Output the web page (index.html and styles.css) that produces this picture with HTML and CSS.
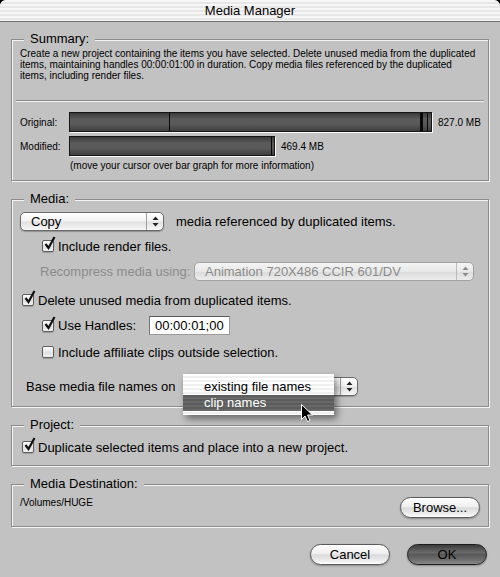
FILE: index.html
```html
<!DOCTYPE html>
<html>
<head>
  <title>Media Manager</title>
  <link rel="stylesheet" href="styles.css">
</head>
<body>
<div class="window">
  <div class="titlebar">Media Manager</div>
  <div class="content">

    <fieldset class="group summary">
      <legend>Summary:</legend>
      <p class="desc">Create a new project containing the items you have selected. Delete unused media from the duplicated<br>items, maintaining handles 00:00:01:00 in duration. Copy media files referenced by the duplicated<br>items, including render files.</p>
      <div class="separator"></div>
      <div class="graphRow first">
        <span class="graphLabel">Original:</span>
        <div class="bar" style="width: 363px;">
          <span class="tick" style="left: 99px;"></span>
          <span class="tick" style="left: 350px; width: 3px;"></span>
          <span class="tick" style="left: 357px;"></span>
        </div>
        <span class="size">827.0 MB</span>
      </div>
      <div class="graphRow">
        <span class="graphLabel">Modified:</span>
        <div class="bar" style="width: 206px;">
          <span class="tick" style="left: 201px;"></span>
        </div>
        <span class="size">469.4 MB</span>
      </div>
      <p class="hint">(move your cursor over bar graph for more information)</p>
    </fieldset>

    <fieldset class="group media">
      <legend>Media:</legend>
      <div class="row rowCopy">
        <div class="popup popupCopy">
          <span class="popupText">Copy</span>
          <span class="popupArrows"><svg width="7" height="11" viewBox="0 0 7 11"><path d="M3.5 0.5 L6.5 4 L0.5 4 Z M0.5 7 L6.5 7 L3.5 10.5 Z" fill="#222"/></svg></span>
        </div>
        <span class="after">media referenced by duplicated items.</span>
      </div>
      <div class="row rowRender indent">
        <span class="check on"><svg width="13" height="15" viewBox="0 0 13 15"><path d="M2.5 8 L5.5 12 L11.5 1" fill="none" stroke="#111" stroke-width="2.2"/></svg></span>
        <span class="checkText">Include render files.</span>
      </div>
      <div class="row rowRecompress">
        <span class="disabledLabel">Recompress media using:</span>
        <div class="popup popupRecompress disabled">
          <span class="popupText">Animation 720X486 CCIR 601/DV</span>
          <span class="popupArrows"><svg width="7" height="11" viewBox="0 0 7 11"><path d="M3.5 0.5 L6.5 4 L0.5 4 Z M0.5 7 L6.5 7 L3.5 10.5 Z" fill="#8a8a8a"/></svg></span>
        </div>
      </div>
      <div class="row rowDelete">
        <span class="check on"><svg width="13" height="15" viewBox="0 0 13 15"><path d="M2.5 8 L5.5 12 L11.5 1" fill="none" stroke="#111" stroke-width="2.2"/></svg></span>
        <span class="checkText">Delete unused media from duplicated items.</span>
      </div>
      <div class="row rowHandles indent">
        <span class="check on"><svg width="13" height="15" viewBox="0 0 13 15"><path d="M2.5 8 L5.5 12 L11.5 1" fill="none" stroke="#111" stroke-width="2.2"/></svg></span>
        <span class="checkText handlesLabel">Use Handles:</span>
        <span class="field">00:00:01;00</span>
      </div>
      <div class="row rowAffiliate indent">
        <span class="check"></span>
        <span class="checkText">Include affiliate clips outside selection.</span>
      </div>
      <div class="row rowBase">
        <span class="baseLabel">Base media file names on</span>
        <div class="popup popupBase">
          <span class="popupText"></span>
          <span class="popupArrows"><svg width="7" height="11" viewBox="0 0 7 11"><path d="M3.5 0.5 L6.5 4 L0.5 4 Z M0.5 7 L6.5 7 L3.5 10.5 Z" fill="#222"/></svg></span>
          <div class="menu">
            <div class="menuItem">existing file names</div>
            <div class="menuItem selected">clip names</div>
            <svg class="cursor" width="13" height="19" viewBox="0 0 13 19"><path d="M0.5 0.5 L0.5 15.5 L4 12 L6.5 17.5 L9 16.5 L6.6 11 L11.5 11 Z" fill="#000" stroke="#fff" stroke-width="1"/></svg>
          </div>
        </div>
      </div>
    </fieldset>

    <fieldset class="group project">
      <legend>Project:</legend>
      <div class="row rowProject">
        <span class="check on"><svg width="13" height="15" viewBox="0 0 13 15"><path d="M2.5 8 L5.5 12 L11.5 1" fill="none" stroke="#111" stroke-width="2.2"/></svg></span>
        <span class="checkText">Duplicate selected items and place into a new project.</span>
      </div>
    </fieldset>

    <fieldset class="group destination">
      <legend>Media Destination:</legend>
      <div class="destRow">
        <span class="path">/Volumes/HUGE</span>
        <button class="button">Browse...</button>
      </div>
    </fieldset>

    <div class="buttons">
      <button class="button">Cancel</button>
      <button class="button default">OK</button>
    </div>

  </div>
</div>
</body>
</html>
```

FILE: styles.css
```css
html {
    background: #000;
}
body {
    margin: 0;
    font-family: "Liberation Sans", Arial, sans-serif;
    font-size: 13px;
    color: #000;
}
.window {
    width: 500px;
    height: 577px;
    background: #c2c2c2;
    border-radius: 6px 6px 0 0;
    overflow: hidden;
}
.titlebar {
    height: 21px;
    line-height: 21px;
    text-align: center;
    font-size: 13px;
    border-bottom: 1px solid #6e6e6e;
    background: repeating-linear-gradient(#f6f6f6 0 2px, #e7e7e7 2px 4px);
}
.content {
    padding: 9px 11px 0;
}

/* group boxes */
.group {
    margin: 0 0 10px;
    padding: 0 8px 8px;
    min-width: 0;
    border: 1px solid #8c8c8c;
    box-shadow: 1px 1px 0 #f4f4f4, inset 1px 1px 0 #f4f4f4;
}
.group legend {
    margin-left: 4px;
    padding: 0 6px;
    line-height: 16px;
    font-size: 13px;
    background: #c2c2c2;
}
.media {
    padding-bottom: 10px;
}
.project {
    padding-bottom: 10px;
}

/* summary */
.desc {
    margin: 1px 0 0;
    font-size: 10px;
    line-height: 11px;
}
.separator {
    margin: 19px -4px 0;
    height: 1px;
    background: #8c8c8c;
    box-shadow: 0 1px 0 #f4f4f4;
}
.graphRow {
    display: flex;
    align-items: center;
    height: 20px;
    margin-top: 4px;
    font-size: 10px;
    white-space: nowrap;
}
.graphRow.first {
    margin-top: 11px;
}
.graphLabel {
    flex-shrink: 0;
    width: 49px;
}
.bar {
    position: relative;
    flex-shrink: 0;
    box-sizing: border-box;
    height: 20px;
    border: 1px solid #151515;
    box-shadow: 1px 1px 0 #fafafa;
    background: linear-gradient(#3a3a3a, #5c5c5c 35%, #585858 65%, #3e3e3e);
}
.tick {
    position: absolute;
    top: 0;
    bottom: 0;
    width: 1px;
    background: #080808;
}
.size {
    margin-left: 6px;
}
.hint {
    margin: 4px 0 0 50px;
    font-size: 10px;
    line-height: 12px;
}

/* rows of controls */
.row {
    display: flex;
    align-items: center;
    height: 16px;
    white-space: nowrap;
}
.indent {
    padding-left: 22px;
}
.rowCopy {
    margin-top: 5px;
    height: 19px;
}
.rowRender {
    margin-top: 7px;
}
.rowRecompress {
    margin-top: 8px;
    height: 19px;
    padding-left: 20px;
}
.rowDelete {
    margin-top: 11px;
    padding-left: 2px;
}
.rowHandles {
    margin-top: 8px;
    height: 19px;
}
.rowAffiliate {
    margin-top: 9px;
}
.rowBase {
    margin-top: 17px;
    height: 19px;
    padding-left: 6px;
}
.rowProject {
    margin-top: 6px;
    padding-left: 2px;
}

.check {
    position: relative;
    flex-shrink: 0;
    box-sizing: border-box;
    width: 12px;
    height: 12px;
    border: 1px solid #5e5e5e;
    border-radius: 2px;
    background: linear-gradient(#fdfdfd, #e2e2e2 55%, #f0f0f0);
    box-shadow: 0 1px 1px rgba(0, 0, 0, 0.2);
}
.check svg {
    position: absolute;
    left: 0;
    top: -5px;
}
.checkText {
    margin-left: 4px;
}
.handlesLabel {
    width: 91px;
}
.field {
    box-sizing: border-box;
    width: 81px;
    height: 19px;
    padding-left: 5px;
    line-height: 17px;
    background: #fff;
    border: 1px solid #9a9a9a;
    border-top-color: #5a5a5a;
    border-left-color: #777;
}
.after {
    margin-left: 12px;
}
.disabledLabel {
    width: 154px;
    color: #8b8b8b;
}
.baseLabel {
    width: 157px;
}

/* popup buttons */
.popup {
    position: relative;
    display: flex;
    flex-shrink: 0;
    box-sizing: border-box;
    height: 19px;
    border: 1px solid #6a6a6a;
    border-radius: 5px;
    background: linear-gradient(#ffffff, #f3f3f3 45%, #e2e2e2 55%, #f7f7f7);
    box-shadow: 0 1px 1px rgba(0, 0, 0, 0.25);
}
.popupText {
    flex: 1;
    padding-left: 10px;
    line-height: 17px;
}
.popupArrows {
    display: flex;
    align-items: center;
    justify-content: center;
    width: 16px;
    border-left: 1px solid #a0a0a0;
}
.popupCopy {
    width: 144px;
}
.popupRecompress {
    width: 280px;
}
.popupBase {
    width: 175px;
}
.popup.disabled {
    border-color: #a2a2a2;
    color: #8b8b8b;
    box-shadow: none;
    background: linear-gradient(#f4f4f4, #e8e8e8 50%, #dcdcdc 55%, #ececec);
}
.popup.disabled .popupArrows {
    border-left-color: #bbb;
}

/* open menu over the base names popup */
.menu {
    position: absolute;
    left: -1px;
    top: -4px;
    width: 151px;
    padding: 4px 0;
    background: repeating-linear-gradient(#ffffff 0 2px, #f0f0f0 2px 4px);
    box-shadow: 3px 4px 7px rgba(0, 0, 0, 0.45);
}
.menuItem {
    padding-left: 21px;
    line-height: 17px;
}
.menuItem.selected {
    line-height: 16px;
    color: #fff;
    background: repeating-linear-gradient(#5c5c5c 0 2px, #686868 2px 4px);
}
.cursor {
    position: absolute;
    left: 118px;
    top: 30px;
}

/* destination */
.destRow {
    display: flex;
    justify-content: space-between;
    align-items: flex-start;
    margin-top: 5px;
}
.path {
    font-size: 10px;
    line-height: 12px;
}

/* buttons */
.button {
    box-sizing: border-box;
    width: 80px;
    height: 21px;
    padding: 0;
    font-family: "Liberation Sans", Arial, sans-serif;
    font-size: 13px;
    color: #000;
    border: 1px solid #5a5a5a;
    border-radius: 11px;
    background: linear-gradient(#fefefe, #efefef 45%, #dadada 52%, #eeeeee 85%, #ffffff);
    box-shadow: 0 1px 2px rgba(0, 0, 0, 0.3);
}
.buttons {
    display: flex;
    justify-content: flex-end;
    gap: 17px;
    margin: 17px 2px 0 0;
}
.button.default {
    border-color: #1e1e1e;
    background: linear-gradient(#3c3c3c, #6a6a6a 40%, #585858 50%, #707070 80%, #8a8a8a);
}
```
